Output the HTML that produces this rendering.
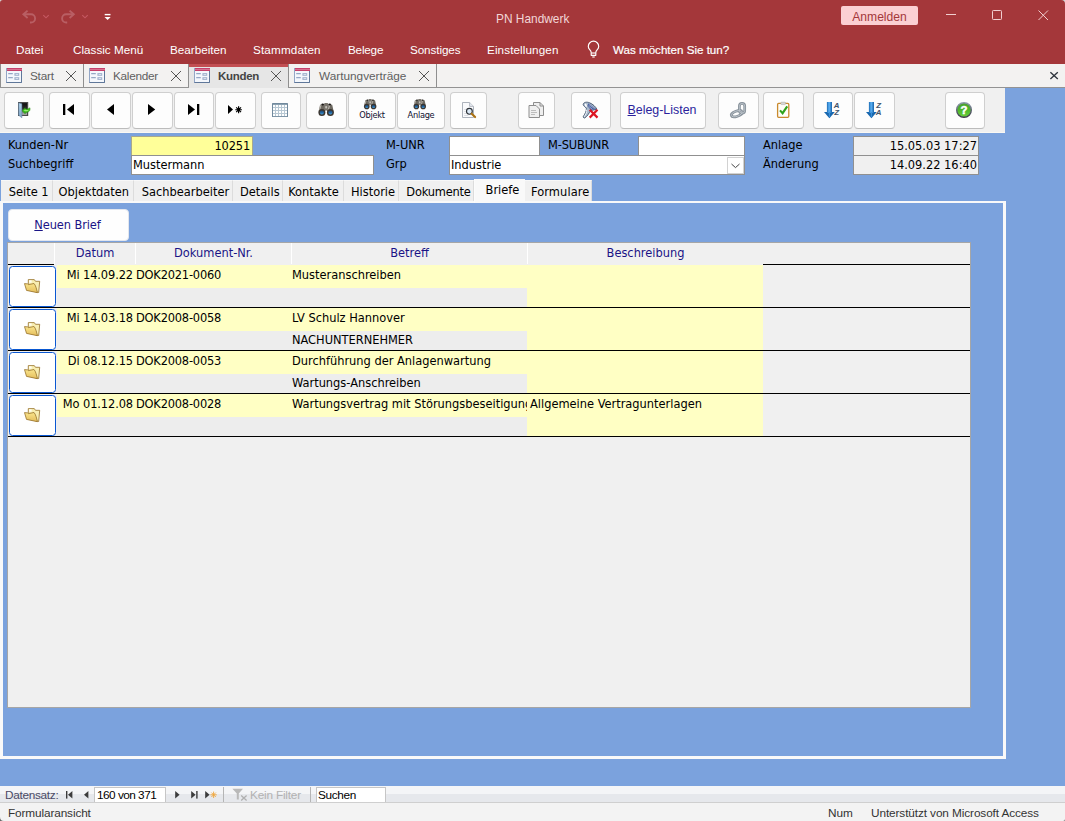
<!DOCTYPE html>
<html lang="de">
<head>
<meta charset="utf-8">
<title>PN Handwerk</title>
<style>
*{box-sizing:border-box;margin:0;padding:0}
html,body{width:1065px;height:821px;overflow:hidden}
body{position:relative;background:#7ba2dd;font-family:"Liberation Sans",sans-serif;font-size:11.8px;color:#000}
.abs{position:absolute}
.th{font-family:"DejaVu Sans Condensed","DejaVu Sans","Liberation Sans",sans-serif;font-size:12.7px}
#title{left:0;top:0;width:1065px;height:64px;background:#a4373a}
#title .t{position:absolute;white-space:nowrap;color:#fff;font-size:11.7px;line-height:16px}
#doctabs{left:0;top:64px;width:1065px;height:24px;background:#f3f2f1;border-bottom:1px solid #939393}
.dt{position:absolute;top:0;height:23px;border-left:1px solid #8f8f8f;border-right:1px solid #8f8f8f;background:#f3f2f1;color:#5f5f5f;font-size:11.8px;line-height:22px;white-space:nowrap}
.dt span{position:absolute;left:29px;top:1px}
#toolbar{left:0;top:88px;width:1005px;height:45px;background:#f0f0f0;border-bottom:1px solid #faf8f3}
.tb{position:absolute;top:4px;height:37px;background:#fdfdfd;border:1px solid #cfcfcf;border-bottom-color:#bcbcbc;border-radius:4px}
.lbl{position:absolute;white-space:nowrap;line-height:16px}
.fld{position:absolute;background:#fff;border:1px solid #909090;white-space:nowrap;line-height:16px;overflow:hidden}
.tab{position:absolute;top:180px;height:21px;background:#f0f0f0;border-right:1px solid #dcdcdc;border-top:1px solid #f8f8f8;white-space:nowrap;line-height:21px;text-align:center}
.hd{position:absolute;top:0;height:21px;background:#f0f0f0;color:#1a1486;text-align:center;line-height:19px;white-space:nowrap}
.row{position:absolute;left:0;width:962px;height:43px;border-bottom:1px solid #000}
.c{position:absolute;white-space:nowrap;line-height:16px;overflow:hidden}
.y{background:#ffffc4}
.g{background:#ededed}
.fb{position:absolute;left:1px;top:1px;width:47px;height:41px;background:#fff;border:1px solid #0a58d2;border-radius:3.5px}
.nv{position:absolute;white-space:nowrap;line-height:16px;font-size:11.8px}
</style>
</head>
<body>
<div id="title" class="abs">
<div class="t" style="left:496px;top:11px;color:#f2d6d7;font-size:11.9px">PN Handwerk</div>
<div class="abs" style="left:841px;top:6px;width:77px;height:19px;background:#fbd0d3;border-radius:2px;color:#a4373a;font-size:12.1px;line-height:19px;padding-top:2px;text-align:center">Anmelden</div>
<div class="t" style="left:613px;top:42px;-webkit-text-stroke:0.2px #fff;font-size:11.6px">Was möchten Sie tun?</div>
<div class="t" style="left:16px;top:42px;letter-spacing:0px">Datei</div>
<div class="t" style="left:73px;top:42px;letter-spacing:0px">Classic Menü</div>
<div class="t" style="left:170px;top:42px;letter-spacing:0px">Bearbeiten</div>
<div class="t" style="left:253px;top:42px;letter-spacing:0.15px">Stammdaten</div>
<div class="t" style="left:348px;top:42px;letter-spacing:-0.2px">Belege</div>
<div class="t" style="left:410px;top:42px;letter-spacing:-0.1px">Sonstiges</div>
<div class="t" style="left:487px;top:42px;letter-spacing:0.1px">Einstellungen</div>
</div>
<div id="doctabs" class="abs">
<div class="dt" style="left:0;width:84px"><span style="letter-spacing:-0.25px">Start</span></div>
<div class="dt" style="left:83px;width:106px"><span style="letter-spacing:-0.3px">Kalender</span></div>
<div class="dt" style="left:288px;width:149px"><span style="left:30px">Wartungverträge</span></div>
<div class="dt" style="left:189px;width:99px;height:24px;z-index:3;border:none;border-top:3px solid #c24f53;background:#e6e6e6;color:#444;font-weight:bold;font-size:11.5px;letter-spacing:-0.3px;line-height:16px"><span style="top:1px">Kunden</span></div>
</div>
<div id="toolbar" class="abs">
<div class="tb" style="left:4px;width:40px"></div>
<div class="tb" style="left:49px;width:41px"></div>
<div class="tb" style="left:91px;width:40px"></div>
<div class="tb" style="left:132px;width:41px"></div>
<div class="tb" style="left:174px;width:40px"></div>
<div class="tb" style="left:215px;width:41px"></div>
<div class="tb" style="left:261px;width:40px"></div>
<div class="tb" style="left:306px;width:41px"></div>
<div class="tb" style="left:348px;width:48px"><div class="abs th" style="left:0;top:15.5px;width:100%;text-align:center;font-size:9.2px;line-height:12px;color:#101030;letter-spacing:-0.3px">Objekt</div></div>
<div class="tb" style="left:397px;width:48px"><div class="abs th" style="left:0;top:15.5px;width:100%;text-align:center;font-size:9.2px;line-height:12px;color:#101030;letter-spacing:-0.3px">Anlage</div></div>
<div class="tb" style="left:450px;width:37px"></div>
<div class="tb" style="left:518px;width:37px"></div>
<div class="tb" style="left:571px;width:40px"></div>
<div class="tb" style="left:620px;width:86px"><div class="abs" style="left:0;top:9px;width:100%;text-align:center;padding-right:2px;font-size:12.4px;line-height:16px;color:#2b1f9c"><u>B</u>eleg-Listen</div></div>
<div class="tb" style="left:718px;width:41px"></div>
<div class="tb" style="left:763px;width:41px"></div>
<div class="tb" style="left:813px;width:40px"></div>
<div class="tb" style="left:854px;width:41px"></div>
<div class="tb" style="left:945px;width:40px"></div>
</div>
<div class="lbl th" style="left:8px;top:137px">Kunden-Nr</div>
<div class="lbl th" style="left:8px;top:156px">Suchbegriff</div>
<div class="fld th" style="left:131px;top:136px;width:122px;height:20px;background:#ffff99;border-color:#a9a98c;text-align:right;padding-right:2px;line-height:17px;letter-spacing:-0.15px">10251</div>
<div class="fld th" style="left:131px;top:155px;width:243px;height:20px;padding-left:1px;line-height:18px">Mustermann</div>
<div class="lbl th" style="left:386px;top:137px">M-UNR</div>
<div class="lbl th" style="left:386px;top:156px">Grp</div>
<div class="fld th" style="left:449px;top:136px;width:91px;height:20px"></div>
<div class="lbl th" style="left:548px;top:137px;letter-spacing:-0.15px">M-SUBUNR</div>
<div class="fld th" style="left:638px;top:136px;width:107px;height:20px"></div>
<div class="fld th" style="left:449px;top:155px;width:296px;height:20px;padding-left:1px;line-height:18px">Industrie</div>
<div class="abs" style="left:727px;top:157px;width:17px;height:17px;background:#fff;border:1px solid #d2d2d2"></div>
<div class="lbl th" style="left:763px;top:137px">Anlage</div>
<div class="lbl th" style="left:763px;top:156px">Änderung</div>
<div class="fld th" style="left:853px;top:136px;width:126px;height:20px;background:#f0f0f0;text-align:right;padding-right:1px;line-height:17px">15.05.03 17:27</div>
<div class="fld th" style="left:853px;top:155px;width:126px;height:20px;background:#f0f0f0;text-align:right;padding-right:1px;line-height:18px">14.09.22 16:40</div>
<div class="tab th" style="left:1px;width:52px;text-align:left;padding-left:7.8px;letter-spacing:0">Seite 1</div>
<div class="tab th" style="left:53px;width:81px;text-align:left;padding-left:5.6px;letter-spacing:0">Objektdaten</div>
<div class="tab th" style="left:134px;width:99px;text-align:left;padding-left:7.8px;letter-spacing:0">Sachbearbeiter</div>
<div class="tab th" style="left:233px;width:50px;text-align:left;padding-left:7px;letter-spacing:0">Details</div>
<div class="tab th" style="left:283px;width:61px;text-align:left;padding-left:5.2px;letter-spacing:0">Kontakte</div>
<div class="tab th" style="left:344px;width:55px;text-align:left;padding-left:7px;letter-spacing:0">Historie</div>
<div class="tab th" style="left:399px;width:75px;text-align:left;padding-left:7.3px;letter-spacing:-0.2px">Dokumente</div>
<div class="tab th" style="left:525px;width:67px;text-align:left;padding-left:6.0px;letter-spacing:0.1px">Formulare</div>
<div class="abs" style="left:0;top:201px;width:1006px;height:558px;border:solid #f9f9f9;border-width:2px 3px 3px 3px"></div>
<div class="tab th" style="left:474px;width:51px;top:179px;height:24px;background:#f9f9f9;border:none;border-left:1px solid #fcfcfc;line-height:22px;text-align:left;padding-left:10.6px">Briefe</div>
<div class="abs th" style="left:8px;top:209px;width:121px;height:32px;background:#fefefe;border:1px solid #e2e6ee;border-radius:4px;color:#1a1486;text-align:center;padding-right:2px;letter-spacing:-0.1px;line-height:29px"><u>N</u>euen Brief</div>
<div class="abs" style="left:7px;top:242px;width:964px;height:466px;background:#a6a6a6"></div>
<div class="abs th" id="sub" style="left:8px;top:243px;width:962px;height:464px;background:#f0f0f0">
<div class="hd" style="left:0;width:46px;border-bottom:1px solid #000;height:22px"></div>
<div class="abs" style="left:46px;top:0;width:1px;height:21px;background:#fff"></div>
<div class="hd" style="left:47px;width:80px">Datum</div>
<div class="abs" style="left:127px;top:0;width:1px;height:21px;background:#fff"></div>
<div class="hd" style="left:128px;width:155px">Dokument-Nr.</div>
<div class="abs" style="left:283px;top:0;width:1px;height:21px;background:#fff"></div>
<div class="hd" style="left:284px;width:235px">Betreff</div>
<div class="abs" style="left:519px;top:0;width:1px;height:21px;background:#fff"></div>
<div class="hd" style="left:520px;width:235px">Beschreibung</div>
<div class="hd" style="left:755px;width:207px;border-bottom:1px solid #000;height:22px"></div>
<div class="row" style="top:22px">
<div class="fb"></div>
<div class="c y" style="left:49px;top:0;width:78px;height:23px;text-align:right;padding:2px 2px 0 0;letter-spacing:-0.1px">Mi 14.09.22</div>
<div class="c y" style="left:127px;top:0;width:156px;height:23px;padding:2px 0 0 1px;letter-spacing:-0.2px">DOK2021-0060</div>
<div class="c y" style="left:283px;top:0;width:236px;height:23px;padding:2px 0 0 1px">Musteranschreiben</div>
<div class="c g" style="left:49px;top:23px;width:470px;height:19px"></div>
<div class="c" style="left:283px;top:23px;width:236px;height:19px;padding:1px 0 0 1px"></div>
<div class="c y" style="left:519px;top:0;width:236px;height:42px;padding:2px 0 0 3px"></div>
</div>
<div class="row" style="top:65px">
<div class="fb"></div>
<div class="c y" style="left:49px;top:0;width:78px;height:23px;text-align:right;padding:2px 2px 0 0;letter-spacing:-0.1px">Mi 14.03.18</div>
<div class="c y" style="left:127px;top:0;width:156px;height:23px;padding:2px 0 0 1px;letter-spacing:-0.2px">DOK2008-0058</div>
<div class="c y" style="left:283px;top:0;width:236px;height:23px;padding:2px 0 0 1px">LV Schulz Hannover</div>
<div class="c g" style="left:49px;top:23px;width:470px;height:19px"></div>
<div class="c" style="left:283px;top:23px;width:236px;height:19px;padding:1px 0 0 1px">NACHUNTERNEHMER</div>
<div class="c y" style="left:519px;top:0;width:236px;height:42px;padding:2px 0 0 3px"></div>
</div>
<div class="row" style="top:108px">
<div class="fb"></div>
<div class="c y" style="left:49px;top:0;width:78px;height:23px;text-align:right;padding:2px 2px 0 0;letter-spacing:-0.1px">Di 08.12.15</div>
<div class="c y" style="left:127px;top:0;width:156px;height:23px;padding:2px 0 0 1px;letter-spacing:-0.2px">DOK2008-0053</div>
<div class="c y" style="left:283px;top:0;width:236px;height:23px;padding:2px 0 0 1px">Durchführung der Anlagenwartung</div>
<div class="c g" style="left:49px;top:23px;width:470px;height:19px"></div>
<div class="c" style="left:283px;top:23px;width:236px;height:19px;padding:1px 0 0 1px">Wartungs-Anschreiben</div>
<div class="c y" style="left:519px;top:0;width:236px;height:42px;padding:2px 0 0 3px"></div>
</div>
<div class="row" style="top:151px">
<div class="fb"></div>
<div class="c y" style="left:49px;top:0;width:78px;height:23px;text-align:right;padding:2px 2px 0 0;letter-spacing:-0.1px">Mo 01.12.08</div>
<div class="c y" style="left:127px;top:0;width:156px;height:23px;padding:2px 0 0 1px;letter-spacing:-0.2px">DOK2008-0028</div>
<div class="c y" style="left:283px;top:0;width:236px;height:23px;padding:2px 0 0 1px">Wartungsvertrag mit Störungsbeseitigung</div>
<div class="c g" style="left:49px;top:23px;width:470px;height:19px"></div>
<div class="c" style="left:283px;top:23px;width:236px;height:19px;padding:1px 0 0 1px"></div>
<div class="c y" style="left:519px;top:0;width:236px;height:42px;padding:2px 0 0 3px">Allgemeine Vertragunterlagen</div>
</div>
</div>
<div class="abs" style="left:0;top:786px;width:1065px;height:17px;background:linear-gradient(#f4f5f7 0,#f4f5f7 50%,#e6e8ec 50%,#e6e8ec 100%);border-bottom:1px solid #cfcfcf"></div>
<div class="nv" style="left:5px;top:787px;color:#4a4a66;letter-spacing:-0.3px">Datensatz:</div>
<div class="abs" style="left:94px;top:787px;width:72px;height:15px;background:#fff;border:1px solid #c6c6c6;border-bottom:none"></div>
<div class="nv" style="left:97px;top:787px;letter-spacing:-0.52px">160 von 371</div>
<div class="abs" style="left:223px;top:787px;width:1px;height:15px;background:#b5b5b5"></div>
<div class="nv" style="left:250px;top:787px;color:#b2b2b2;letter-spacing:-0.2px">Kein Filter</div>
<div class="abs" style="left:310px;top:787px;width:1px;height:15px;background:#b5b5b5"></div>
<div class="abs" style="left:316px;top:787px;width:70px;height:15px;background:#fff;border:1px solid #c6c6c6;border-bottom:none"></div>
<div class="nv" style="left:318px;top:787px;letter-spacing:-0.35px">Suchen</div>
<div class="abs" style="left:0;top:803px;width:1065px;height:18px;background:#f3f3f3"></div>
<div class="nv" style="left:8px;top:805px;color:#333;letter-spacing:-0.12px">Formularansicht</div>
<div class="nv" style="left:828px;top:805px;color:#333">Num</div>
<div class="nv" style="left:871px;top:805px;color:#333;letter-spacing:-0.1px">Unterstützt von Microsoft Access</div>
<svg class="abs" style="left:0;top:0;z-index:5" width="1065" height="821" viewBox="0 0 1065 821">
<defs>
<linearGradient id="gArrow" x1="0" y1="0" x2="1" y2="0"><stop offset="0" stop-color="#1a6ab2"/><stop offset="0.45" stop-color="#5cb2f6"/><stop offset="1" stop-color="#1763aa"/></linearGradient>
<linearGradient id="gFold" x1="0" y1="0" x2="0" y2="1"><stop offset="0" stop-color="#fae58c"/><stop offset="1" stop-color="#e4bd5c"/></linearGradient>
<linearGradient id="gLens" x1="0" y1="0" x2="0" y2="1"><stop offset="0" stop-color="#1b4470"/><stop offset="0.55" stop-color="#2469a6"/><stop offset="1" stop-color="#52a8da"/></linearGradient>
<linearGradient id="gDoor" x1="0" y1="0" x2="0" y2="1"><stop offset="0" stop-color="#b6d6ef"/><stop offset="1" stop-color="#7ea3c4"/></linearGradient>
<linearGradient id="gDoorIn" x1="0" y1="0" x2="0" y2="1"><stop offset="0" stop-color="#0a0a0a"/><stop offset="0.45" stop-color="#2a2a2a"/><stop offset="1" stop-color="#c8c8c8"/></linearGradient>
<linearGradient id="gHelp" x1="0" y1="0" x2="0" y2="1"><stop offset="0" stop-color="#4a9f2e"/><stop offset="0.5" stop-color="#4fb82a"/><stop offset="1" stop-color="#68d03c"/></linearGradient>
<linearGradient id="gRing" x1="0" y1="0" x2="0" y2="1"><stop offset="0" stop-color="#8d9cab"/><stop offset="1" stop-color="#3a3a46"/></linearGradient>
<g id="formico">
  <rect x="0.5" y="0.5" width="15" height="14" fill="#f4f7fc" stroke="#93a6c6"/>
  <path d="M15.5 3 V14.5 H0.5" fill="none" stroke="#5f7799"/>
  <rect x="1" y="0" width="15" height="3" fill="#c5406b"/>
  <rect x="1" y="1" width="15" height="1" fill="#d8728f"/>
  <rect x="2.2" y="5.2" width="4.6" height="1" fill="#7e95b8"/>
  <rect x="2.2" y="9.2" width="4.6" height="1" fill="#7e95b8"/>
  <rect x="8.4" y="5.1" width="4.8" height="2.7" fill="#9fb0cc"/>
  <rect x="9.6" y="6" width="2.6" height="0.9" fill="#dfe6f1"/>
  <rect x="8.4" y="9.2" width="4.8" height="2.7" fill="#9fb0cc"/>
  <rect x="9.6" y="10.1" width="2.6" height="0.9" fill="#dfe6f1"/>
</g>
<g id="tabx" stroke="#555" stroke-width="1" fill="none"><path d="M0 0 L10 10 M10 0 L0 10"/></g>
<g id="bino">
  <path d="M2.4 2.2 L5.9 1.3 L7.8 8.4 L0.9 8.8 z" fill="#6d6961"/>
  <path d="M14.5 2.2 L11 1.3 L9.1 8.4 L16 8.8 z" fill="#6d6961"/>
  <rect x="6.3" y="0.4" width="4.3" height="7.4" rx="1.2" fill="#77736b"/>
  <rect x="7.5" y="3.4" width="1.9" height="2.6" rx="0.8" fill="#c4c1ba"/>
  <path d="M3.3 2.6 L1.9 7.2" stroke="#b9b5ad" stroke-width="1.1"/>
  <path d="M12 2.4 L10.6 7" stroke="#b9b5ad" stroke-width="1.1"/>
  <ellipse cx="5" cy="1.9" rx="1.3" ry="0.9" fill="#1a1715"/>
  <ellipse cx="12" cy="1.9" rx="1.3" ry="0.9" fill="#1a1715"/>
  <circle cx="4.2" cy="9.8" r="3.5" fill="#3b3631"/>
  <circle cx="12.7" cy="9.8" r="3.5" fill="#3b3631"/>
  <circle cx="4.2" cy="9.9" r="2" fill="url(#gLens)"/>
  <circle cx="12.7" cy="9.9" r="2" fill="url(#gLens)"/>
</g>
<g id="folder">
  <path d="M4.3 0.6 h6 l1.2 1.7 h4.2 l-1 11.2 l-10.4 -2.6 z" fill="#f8eeb2" stroke="#96702a" stroke-width="0.8" stroke-linejoin="round"/>
  <path d="M5 1.3 h2.6 v2.4 h-2.6 z" fill="#fffdf0"/>
  <path d="M0.5 4.6 L3.7 4.9 L4.5 5.6 L10 4.5 C11.6 6.2 12.6 10 13.4 13.7 L2.5 11.4 z" fill="url(#gFold)" stroke="#96702a" stroke-width="0.8" stroke-linejoin="round"/>
</g>
</defs>

<!-- title bar: undo / redo / customize -->
<g fill="none" stroke="#b95f64" stroke-width="1.9" stroke-linejoin="miter">
  <path d="M27.6 10.6 L23.4 14.3 L27.6 18"/><path d="M23.8 14.3 H31 a4.1 4.1 0 0 1 0 8.2 h-1"/>
  <path d="M69.6 10.6 L73.8 14.3 L69.6 18"/><path d="M73.4 14.3 H66.2 a4.1 4.1 0 0 0 0 8.2 h1"/>
</g>
<g fill="none" stroke="#c65a63" stroke-width="1.1">
  <path d="M43.3 15.2 l2.7 2.6 l2.7 -2.6"/><path d="M82.3 15.2 l2.7 2.6 l2.7 -2.6"/>
</g>
<rect x="104.7" y="13.9" width="5.8" height="1.4" fill="#fff"/><path d="M104.5 16.9 h6.2 l-3.1 3.1 z" fill="#fff"/>
<!-- window buttons -->
<g stroke="#f1cfd0" stroke-width="1" fill="none">
  <path d="M946 14.5 H956"/>
  <rect x="992.5" y="10.5" width="9" height="9" rx="0.8"/>
  <path d="M1038.5 10.5 L1048 20 M1048 10.5 L1038.5 20"/>
</g>
<path d="M0 0 h3 a3 3 0 0 0 -3 3 z" fill="#d8d8d8"/>
<path d="M1065 0 h-4 a4 4 0 0 1 4 4 z" fill="#cfd6d6"/>
<path d="M0 821 v-4 a4 4 0 0 0 4 4 z" fill="#666"/>
<path d="M1065 821 v-2 a2 2 0 0 1 -2 2 z" fill="#777"/>
<!-- bulb -->
<g stroke="#fff" stroke-width="1.15" fill="none" stroke-linejoin="round">
  <path d="M591.2 52.6 C591.2 50.2 588.3 49.6 588.3 46.4 A5.2 5.2 0 0 1 598.7 46.4 C598.7 49.6 595.8 50.2 595.8 52.6 V55.3 H591.2 Z"/>
  <path d="M591.2 53 H595.8"/>
  <path d="M592.3 57 H594.7"/>
</g>

<!-- doc tab icons -->
<use href="#formico" x="6" y="68"/><use href="#tabx" x="66" y="71"/>
<use href="#formico" x="89" y="68"/><use href="#tabx" x="171" y="71"/>
<use href="#formico" x="194" y="68"/><use href="#tabx" x="271" y="71"/>
<use href="#formico" x="294" y="68"/><use href="#tabx" x="419" y="71"/>
<path d="M1050.4 72.2 L1057.8 79 M1057.8 72.2 L1050.4 79" stroke="#2f353d" stroke-width="1.35" fill="none"/>

<!-- toolbar: exit door -->
<rect x="18.6" y="102.6" width="9" height="12.8" fill="url(#gDoorIn)" stroke="#4b4b4b" stroke-width="1.2"/>
<path d="M18.7 102.8 L21.9 103.8 V117.8 L18.7 115.3 z" fill="url(#gDoor)" stroke="#5e7f9e" stroke-width="0.5"/>
<path d="M22.1 110.7 L25.2 107.7 V109.2 C27.4 109.4 28.8 109 29.9 107.8 C30.4 110.4 29.4 112.4 25.2 112.4 V113.8 z" fill="#3dbd1d" stroke="#2a9412" stroke-width="0.6"/>
<path d="M23.6 110.6 L25.4 109.4 C26.8 110.2 28 110.2 28.8 109.8 C28.4 111 27 111.4 25.4 111.3 z" fill="#98ee6c"/>
<!-- nav arrows -->
<g fill="#000">
  <rect x="63" y="104" width="2.3" height="11"/><path d="M67 109.5 L74 104 V115 z"/>
  <path d="M107 109.5 L114 104 V115 z"/>
  <path d="M155.2 109.5 L148 104 V115 z"/>
  <path d="M195 109.5 L188 104 V115 z"/><rect x="197" y="104" width="2.3" height="11"/>
  <path d="M233 109.5 L228 105 V114 z"/>
</g>
<g stroke="#000" stroke-width="1.2"><path d="M238.6 106.3 V113.2 M235.3 109.75 H241.9 M236.2 107.3 L241 112.2 M241 107.3 L236.2 112.2"/></g>
<!-- grid -->
<rect x="272" y="103" width="16" height="14" rx="0.6" fill="#71899d"/>
<rect x="273" y="104.6" width="14" height="11.6" fill="#b7c7d3"/>
<g fill="#fdfefe"><rect x="273" y="105" width="2" height="2"/><rect x="276" y="105" width="2" height="2"/><rect x="279" y="105" width="2" height="2"/><rect x="282" y="105" width="2" height="2"/><rect x="285" y="105" width="2" height="2"/><rect x="273" y="108" width="2" height="2"/><rect x="276" y="108" width="2" height="2"/><rect x="279" y="108" width="2" height="2"/><rect x="282" y="108" width="2" height="2"/><rect x="285" y="108" width="2" height="2"/><rect x="273" y="111" width="2" height="2"/><rect x="276" y="111" width="2" height="2"/><rect x="279" y="111" width="2" height="2"/><rect x="282" y="111" width="2" height="2"/><rect x="285" y="111" width="2" height="2"/><rect x="273" y="114" width="2" height="2"/><rect x="276" y="114" width="2" height="2"/><rect x="279" y="114" width="2" height="2"/><rect x="282" y="114" width="2" height="2"/><rect x="285" y="114" width="2" height="2"/></g>
<!-- binoculars -->
<use href="#bino" x="317.7" y="102.6"/>
<g transform="translate(363.4,98.6) scale(0.8)"><use href="#bino"/></g>
<g transform="translate(413,98.6) scale(0.8)"><use href="#bino"/></g>
<!-- preview -->
<path d="M462.5 102.5 H469.6 L473.5 106.4 V117.5 H462.5 z" fill="#f9fafc" stroke="#a4aab4" stroke-width="0.9"/>
<path d="M469.6 102.5 V106.4 H473.5" fill="#e9edf3" stroke="#a4aab4" stroke-width="0.8"/>
<g stroke="#d5d8de" stroke-width="0.8"><path d="M464.2 109.5 h2 M464.2 111.5 h1.4 M464.2 113.5 h2 M464.2 115.5 h4"/></g>
<circle cx="469.4" cy="111.3" r="2.9" fill="#dbe9f6" stroke="#2d3238" stroke-width="1.15"/>
<path d="M471.7 113.7 L475.1 117.1" stroke="#ab7212" stroke-width="2.1" stroke-linecap="round"/>
<!-- copy -->
<path d="M533.5 102.5 H540 L543.5 106 V115.5 H533.5 z" fill="#efefef" stroke="#8e8e8e"/>
<path d="M540 102.5 V106 H543.5" fill="none" stroke="#8e8e8e"/>
<path d="M529 105.5 H536 L539.5 109 V117.5 H529 z" fill="#f0f0f0" stroke="#8e8e8e"/>
<g stroke="#bdbdbd"><path d="M531 110.5 h5 M531 112.5 h6 M531 114.5 h4"/></g>
<!-- filter with x -->
<path d="M583.2 104.6 C583.4 102 587 101.7 589.6 102.8 C592.6 104 596 107 596.8 109.3 L590.6 110.6 C589 113.2 587.2 116.6 584.6 118 L583 117 C585 114 586.6 111 586.4 108.6 C585.6 107 583.4 106.2 583.2 104.6 Z" fill="#a9b9cc" stroke="#3d506a" stroke-width="0.9"/>
<path d="M588.4 103.2 L596.2 108.9 L591 110.2 L587.4 106 Z" fill="#4d63a0"/>
<path d="M589 104.6 l5.6 4 M588.4 106 l4 3.4" stroke="#c7d2ea" stroke-width="0.6"/>
<path d="M584.6 104.2 C585.6 103.4 586.6 104 586.8 105.4 C587 107 586.2 107.6 585.4 106.6 Z" fill="#fff"/>
<path d="M586.6 109.6 C587.2 112 585.6 115 584 117" stroke="#eef2f7" stroke-width="1" fill="none"/>
<path d="M589.7 109.8 L597.5 117.6 M597.5 109.8 L589.7 117.6" stroke="#dd1522" stroke-width="2.2"/>
<!-- chain link -->
<g fill="none" stroke="#87919a" stroke-width="2.7">
  <ellipse cx="736.7" cy="113.7" rx="5.7" ry="2.6" transform="rotate(-19 736.7 113.7)"/>
  <rect x="739.4" y="103.4" width="5.3" height="9.8" rx="2.65"/>
</g>
<g fill="none" stroke="#c3cad0" stroke-width="0.8">
  <ellipse cx="736.7" cy="113.7" rx="5.7" ry="2.6" transform="rotate(-19 736.7 113.7)"/>
  <rect x="739.4" y="103.4" width="5.3" height="9.8" rx="2.65"/>
</g>
<!-- clipboard check -->
<rect x="777.6" y="103.4" width="11.2" height="13.9" rx="1" fill="#fffdf8" stroke="#c98a2e" stroke-width="1.3"/>
<rect x="780.8" y="102.2" width="4.8" height="2.4" rx="0.8" fill="#d6d6d6" stroke="#a5a5a5" stroke-width="0.5"/>
<path d="M780 110.4 L782.6 113.2 L787.2 106.4" fill="none" stroke="#2fa31d" stroke-width="2.1"/>
<!-- sort AZ / ZA -->
<path d="M824 112 H834.8 L829.4 118.3 z" fill="#1766ae"/><rect x="826.9" y="102" width="5.1" height="11" fill="url(#gArrow)"/><path d="M828.8 112 h1.3 v4.5 l-0.65 0.8 l-0.65 -0.8 z" fill="#3b8fd8"/>
<path d="M866 112 H876.8 L871.4 118.3 z" fill="#1766ae"/><rect x="868.9" y="102" width="5.1" height="11" fill="url(#gArrow)"/><path d="M870.8 112 h1.3 v4.5 l-0.65 0.8 l-0.65 -0.8 z" fill="#3b8fd8"/>
<g font-family="Liberation Sans,sans-serif" font-weight="bold" font-style="italic" font-size="7.9" fill="#44546a">
  <text x="833.8" y="107.8">A</text><text x="834.2" y="114.8">Z</text>
  <text x="876.2" y="107.8">Z</text><text x="875.8" y="114.8">A</text>
</g>
<!-- help -->
<circle cx="964" cy="110" r="7.3" fill="url(#gHelp)" stroke="url(#gRing)" stroke-width="1.5"/>
<text x="964" y="114.1" text-anchor="middle" font-family="Liberation Sans,sans-serif" font-weight="bold" font-size="11.5" fill="#fff" stroke="#fff" stroke-width="0.45">?</text>
<!-- combo chevron -->
<path d="M731.5 164 L735.5 167.6 L739.5 164" fill="none" stroke="#444" stroke-width="1"/>
<!-- folders -->
<use href="#folder" x="24" y="279"/>
<use href="#folder" x="24" y="322"/>
<use href="#folder" x="24" y="365"/>
<use href="#folder" x="24" y="408"/>
<!-- record nav -->
<g fill="#3c3c3c">
  <rect x="66" y="791" width="1.4" height="7.6"/><path d="M68 794.8 L72.4 791 V798.6 z"/>
  <path d="M84 794.8 L88.4 791 V798.6 z"/>
  <path d="M179.6 794.8 L175.2 791 V798.6 z"/>
  <path d="M195.6 794.8 L191.2 791 V798.6 z"/><rect x="196.2" y="791" width="1.4" height="7.6"/>
  <path d="M209.6 794.8 L205.2 791 V798.6 z"/>
</g>
<g stroke="#efa63c" stroke-width="0.9"><path d="M213.6 791.6 V798 M210.4 794.8 H216.8 M211.4 792.6 L215.8 797 M215.8 792.6 L211.4 797"/></g>
<!-- nav filter icon -->
<path d="M232.4 788.8 H243 L238.8 793.6 V799.6 H236.8 V793.6 z" fill="#b9b9b9"/>
<path d="M241.2 795.4 L246.6 800.4 M246.6 795.4 L241.2 800.4" stroke="#b0b0b0" stroke-width="1.3"/>
</svg>

</body>
</html>
